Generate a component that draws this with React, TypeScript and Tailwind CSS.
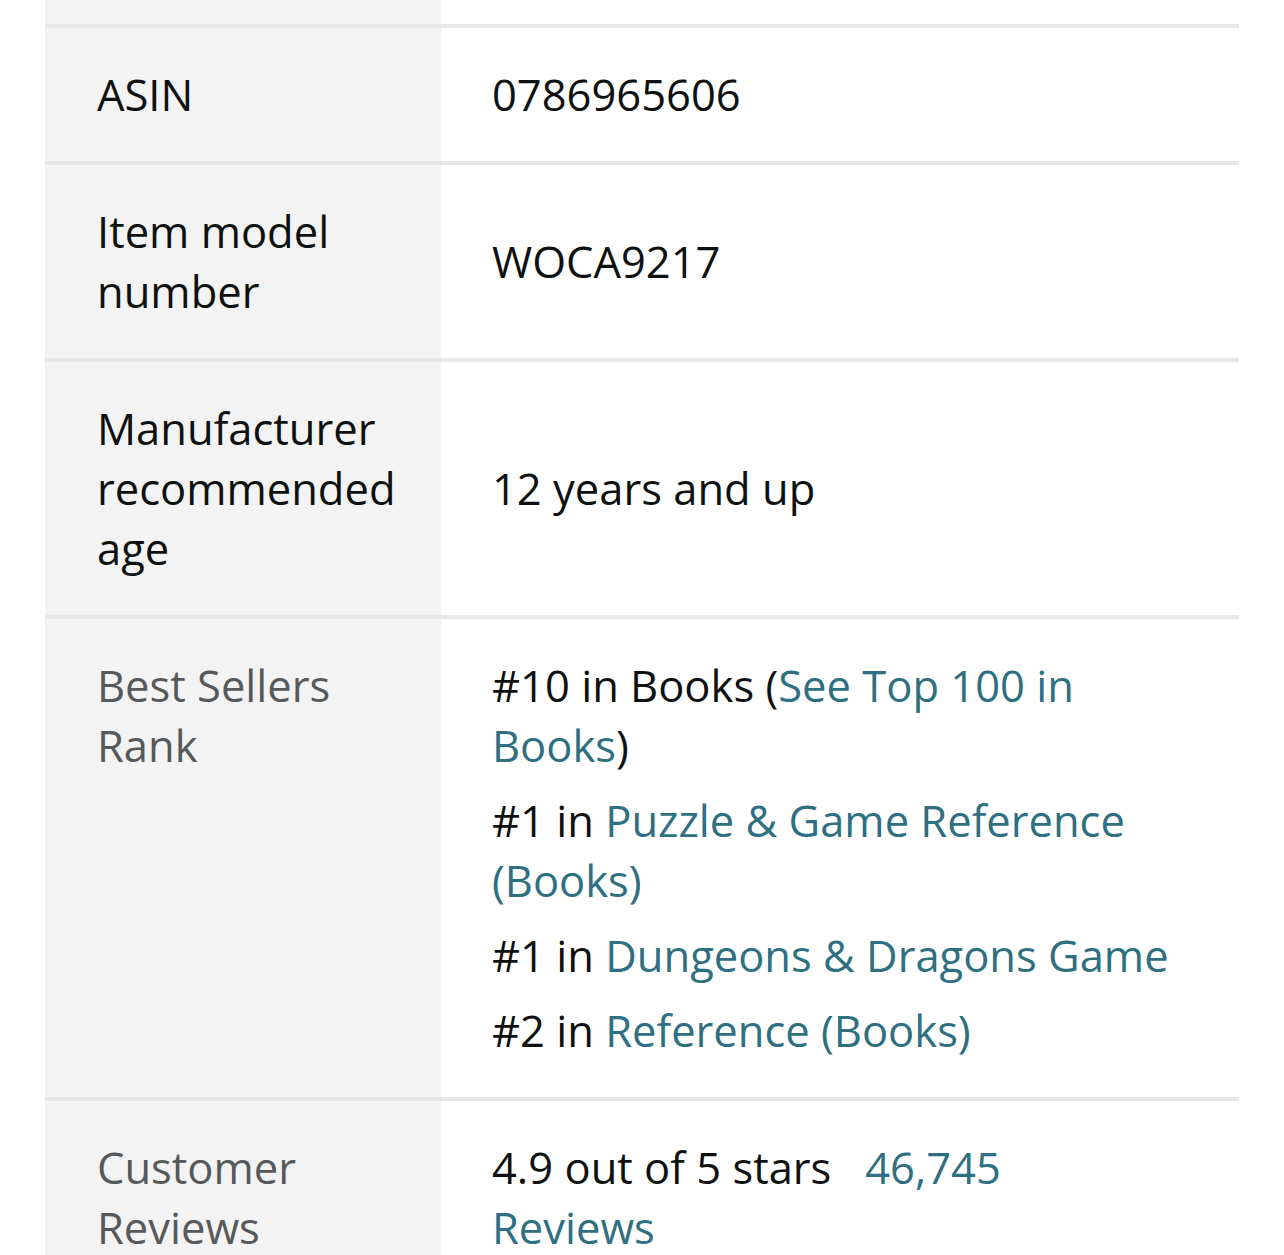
const font = { fontFamily: '"Open Sans", "Noto Sans", sans-serif' };

type Row = {
  label: string;
  muted?: boolean;
  top?: boolean;
  value: React.ReactNode;
};

function Link({ children }: { children: React.ReactNode }) {
  return <a className="text-[#2e6f81]">{children}</a>;
}

const rows: Row[] = [
  { label: "ASIN", value: "0786965606" },
  { label: "Item model number", value: "WOCA9217" },
  { label: "Manufacturer recommended age", value: "12 years and up" },
  {
    label: "Best Sellers Rank",
    muted: true,
    top: true,
    value: (
      <ul className="flex flex-col gap-[15px]">
        <li>
          #10 in Books (<Link>See Top 100 in Books</Link>)
        </li>
        <li>
          #1 in <Link>Puzzle &amp; Game Reference (Books)</Link>
        </li>
        <li>
          #1 in <Link>Dungeons &amp; Dragons Game</Link>
        </li>
        <li>
          #2 in <Link>Reference (Books)</Link>
        </li>
      </ul>
    ),
  },
  {
    label: "Customer Reviews",
    muted: true,
    top: true,
    value: (
      <p>
        4.9 out of 5 stars&nbsp;&nbsp; <Link>46,745 Reviews</Link>
      </p>
    ),
  },
];

export default function App() {
  return (
    <div className="min-h-[1255px] bg-white px-[45px] overflow-hidden" style={font}>
      <div className="flex h-6">
        <div className="w-[396px] bg-[#f3f3f3]" />
        <div className="flex-1" />
      </div>
      {rows.map((r) => (
        <div key={r.label} className="flex border-t-4 border-[#e7e7e7] text-[43.5px] leading-[60px] text-[#0f1111]">
          <div className="w-[396px] shrink-0 bg-[#f3f3f3] pl-[52px] pr-4 py-[36.5px]">
            <span className={r.muted ? "text-[#565959]" : ""}>{r.label}</span>
          </div>
          <div className={`flex-1 flex pl-[51px] pr-[69px] py-[36.5px] ${r.top ? "items-start" : "items-center"}`}>
            <div>{r.value}</div>
          </div>
        </div>
      ))}
    </div>
  );
}
